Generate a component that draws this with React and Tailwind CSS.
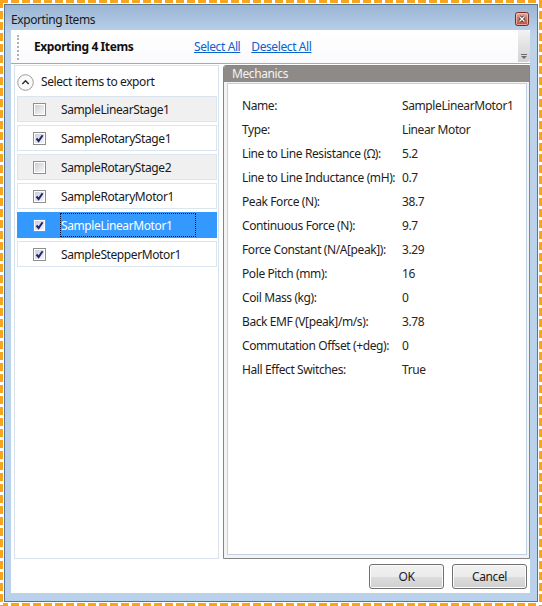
const items = [
  { name: 'SampleLinearStage1', checked: false },
  { name: 'SampleRotaryStage1', checked: true },
  { name: 'SampleRotaryStage2', checked: false },
  { name: 'SampleRotaryMotor1', checked: true },
  { name: 'SampleLinearMotor1', checked: true, selected: true },
  { name: 'SampleStepperMotor1', checked: true },
]

const props = [
  ['Name:', 'SampleLinearMotor1'],
  ['Type:', 'Linear Motor'],
  ['Line to Line Resistance (Ω):', '5.2'],
  ['Line to Line Inductance (mH):', '0.7'],
  ['Peak Force (N):', '38.7'],
  ['Continuous Force (N):', '9.7'],
  ['Force Constant (N/A[peak]):', '3.29'],
  ['Pole Pitch (mm):', '16'],
  ['Coil Mass (kg):', '0'],
  ['Back EMF (V[peak]/m/s):', '3.78'],
  ['Commutation Offset (+deg):', '0'],
  ['Hall Effect Switches:', 'True'],
]

function CheckBox({ checked }) {
  return (
    <span className="w-[13px] h-[13px] border border-[#8e8f8f] bg-white p-px shrink-0">
      <span className="block w-full h-full bg-[linear-gradient(135deg,#cbcfd5,#f6f6f6)] relative">
        {checked && (
          <svg width="11" height="11" viewBox="0 0 11 11" className="absolute -left-px -top-px">
            <path d="M2.5 5.5 L4.6 8 L8.6 2.2" fill="none" stroke="#23237a" strokeWidth="2" />
          </svg>
        )}
      </span>
    </span>
  )
}

function CloseButton() {
  return (
    <svg width="14" height="14" viewBox="0 0 14 14">
      <defs>
        <linearGradient id="cb" x1="0" y1="0" x2="0" y2="1">
          <stop offset="0" stopColor="#e8b0a6" />
          <stop offset="0.5" stopColor="#d0786b" />
          <stop offset="1" stopColor="#c24a3c" />
        </linearGradient>
      </defs>
      <rect x="0.5" y="0.5" width="13" height="13" rx="2" fill="url(#cb)" stroke="#6e2f28" />
      <rect x="1.5" y="1.5" width="11" height="11" rx="1" fill="none" stroke="#f2c7be" strokeOpacity="0.7" />
      <path d="M4.5 4.5 L9.5 9.5 M9.5 4.5 L4.5 9.5" stroke="#3a2a2a" strokeWidth="3" />
      <path d="M4.5 4.5 L9.5 9.5 M9.5 4.5 L4.5 9.5" stroke="#ffffff" strokeWidth="1.4" />
    </svg>
  )
}

function WinButton({ children }) {
  return (
    <button className="w-[75px] h-[25px] rounded-[3px] border border-[#707070] bg-[linear-gradient(180deg,#f2f2f2_0%,#ebebeb_50%,#dddddd_50%,#cfcfcf_100%)] text-[12px] text-[#1b1b1b] shadow-[inset_0_0_0_1px_#fcfcfc]">
      {children}
    </button>
  )
}

export default function App() {
  return (
    <div
      className="w-[542px] h-[606px] p-[3px] whitespace-nowrap tracking-[-0.4px] [background:repeating-linear-gradient(180deg,#f7a51c_0_8px,#fff_8px_11px)_left/3px_100%_no-repeat,repeating-linear-gradient(180deg,#f7a51c_0_8px,#fff_8px_11px)_right/3px_100%_no-repeat,repeating-linear-gradient(90deg,#f7a51c_0_8px,#fff_8px_11px)]"
      style={{ fontFamily: '"Segoe UI", "Noto Sans", sans-serif' }}
    >
      <div className="w-full h-full bg-white p-px">
        <div className="w-full h-full flex flex-col border border-[#5a7594] bg-[linear-gradient(180deg,#9ab5d5_0px,#bcd3ea_30px,#b9d1ea_100%)] pl-[6px] pr-[7px] pb-[8px]">
          {/* title bar */}
          <div className="h-[25px] flex justify-between shrink-0">
            <div className="pt-[7px] text-[12px] leading-[16px] text-[#1a1a1a]">Exporting Items</div>
            <div className="pt-[7px] pr-px">
              <CloseButton />
            </div>
          </div>

          {/* client */}
          <div className="flex-1 bg-white flex flex-col">
            {/* toolbar */}
            <div className="h-[34px] shrink-0 flex border-b border-[#a9a9a9] bg-[linear-gradient(180deg,#ffffff,#faf9fc)]">
              <div className="ml-[6px] mt-[5px] h-[25px] border-l-2 border-dotted border-[#b0b0b0]" />
              <div className="flex items-center text-[12px]">
                <span className="ml-[15px] w-[160px] font-bold text-[#111]">Exporting 4 Items</span>
                <span className="text-[#0b63ce] underline">Select All</span>
                <span className="ml-[11px] text-[#0b63ce] underline">Deselect All</span>
              </div>
              <div className="flex-1" />
              <div className="w-[12px] mb-px rounded-r-[3px] bg-[linear-gradient(180deg,#f2f2f2,#d2d2d2)] flex flex-col items-center justify-end pb-[2px]">
                <div className="w-[6px] h-px bg-[#6a6a6a] mb-px" />
                <svg width="6" height="4" viewBox="0 0 6 4">
                  <path d="M0 0 L6 0 L3 3 Z" fill="#6a6a6a" />
                </svg>
              </div>
            </div>

            {/* panels */}
            <div className="h-[494px] mt-px flex shrink-0">
              {/* left list */}
              <div className="ml-[3px] w-[205px] border border-[#d8e2ec] bg-white flex flex-col">
                <div className="h-[30px] flex items-center pl-[2px] pt-[2px] text-[12px] text-[#1a1a1a]">
                  <svg width="17" height="17" viewBox="0 0 17 17">
                    <circle cx="8.5" cy="8.5" r="7.8" fill="#fafafa" stroke="#9a9a9a" />
                    <path d="M5.3 10 L8.5 6.8 L11.7 10" fill="none" stroke="#333" strokeWidth="1.6" />
                  </svg>
                  <span className="ml-[7px]">Select items to export</span>
                </div>
                <div className="ml-[2px] w-[200px]">
                  {items.map((it, i) => (
                    <div
                      key={it.name}
                      className={
                        'h-[26px] mb-[3px] border flex items-center pl-[15px] text-[12px] ' +
                        (it.selected
                          ? 'bg-[#3399ff] border-[#3399ff] text-white'
                          : i % 2 === 0
                          ? 'bg-[#f0f0f0] border-[#dbe5ef] text-[#1a1a1a]'
                          : 'bg-white border-[#dbe5ef] text-[#1a1a1a]')
                      }
                    >
                      <CheckBox checked={it.checked} />
                      {it.selected ? (
                        <span className="ml-[14px] w-[136px] h-[24px] flex items-center pt-[2px] border border-dotted border-[#101030]">
                          {it.name}
                        </span>
                      ) : (
                        <span className="ml-[15px] pt-[2px]">{it.name}</span>
                      )}
                    </div>
                  ))}
                </div>
              </div>

              {/* right details */}
              <div className="ml-[4px] flex-1 flex flex-col border border-[#858585] rounded-tl-[3px] bg-[#f3f3f3]">
                <div className="h-[16px] bg-[#8e8a87] rounded-tl-[2px] pl-[8px] text-[12px] leading-[16px] text-[#f4f4f4]">
                  Mechanics
                </div>
                <div className="flex-1 mt-px ml-[3px] mr-[2px] mb-[3px] border border-[#c3d2e2] bg-white pl-[14px] pt-[10px]">
                  {props.map(([k, v]) => (
                    <div key={k} className="flex h-[24px] items-center text-[12px] text-[#1e1e1e]">
                      <span className="w-[160px] shrink-0">{k}</span>
                      <span className="text-[#2a2520]">{v}</span>
                    </div>
                  ))}
                </div>
              </div>
            </div>

            {/* buttons */}
            <div className="flex-1 flex justify-end items-start gap-[8px] pt-[5px] pr-[3px]">
              <WinButton>OK</WinButton>
              <WinButton>Cancel</WinButton>
            </div>
          </div>
        </div>
      </div>
    </div>
  )
}
